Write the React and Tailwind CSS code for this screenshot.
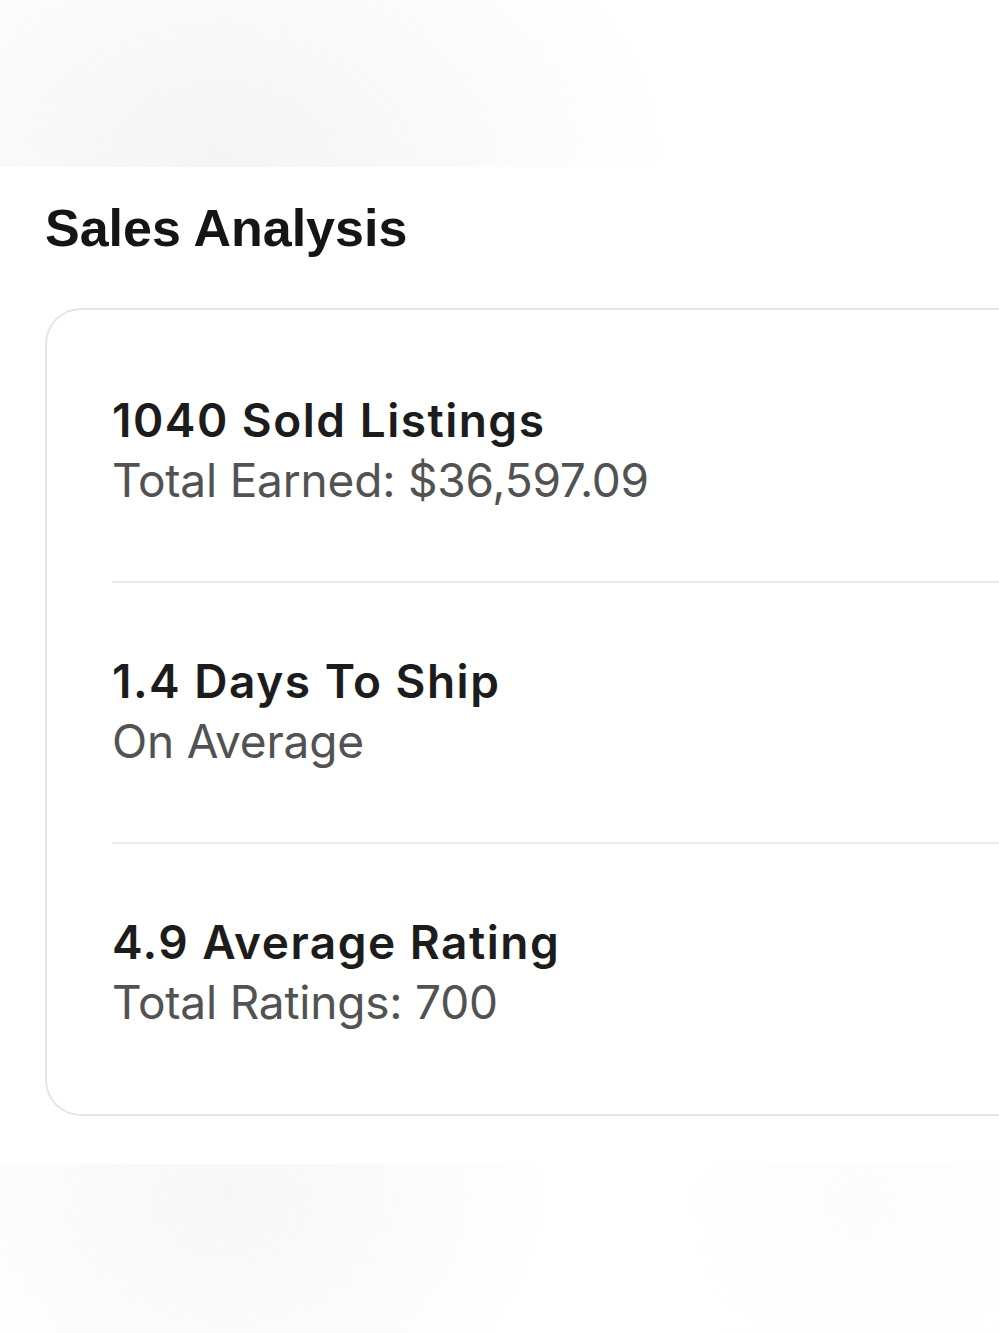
const STATS = [
  { title: '1040 Sold Listings', sub: 'Total Earned: $36,597.09' },
  { title: '1.4 Days To Ship', sub: 'On Average' },
  { title: '4.9 Average Rating', sub: 'Total Ratings: 700' },
]

export default function App() {
  return (
    <div className="min-h-[1333px] w-[999px] overflow-hidden bg-white flex flex-col">
      {/* blurred preview strip */}
      <div className="h-[167px] shrink-0 bg-[radial-gradient(ellipse_460px_320px_at_220px_160px,#f5f5f5_0%,#f9f9f9_45%,#ffffff_100%)]" />

      <div className="pl-[45px] pt-[31px]">
        <h2 className="font-['Liberation_Sans',Arial,sans-serif] font-bold text-[52px] leading-[60px] text-[#151515]">
          Sales Analysis
        </h2>

        <div className="mt-[50px] border-2 border-r-0 border-[#e6e6e6] rounded-l-[36px] pl-[65px] pt-[12px] pb-[11px] font-['Inter',sans-serif]">
          {STATS.map((s, i) => (
            <div key={s.title}>
              {i > 0 && <div className="h-[2px] bg-[#ebebeb]" />}
              <div className="pt-[68px] pb-[71px]">
                <p className="text-[46px] leading-[60px] font-semibold tracking-[1.5px] text-[#1c1c1c]">{s.title}</p>
                <p className="text-[46px] leading-[60px] font-normal tracking-[-0.2px] text-[#525252]">{s.sub}</p>
              </div>
            </div>
          ))}
        </div>
      </div>

      {/* blurred preview strip, bottom */}
      <div className="mt-[48px] flex-1 bg-[radial-gradient(ellipse_330px_260px_at_230px_30px,#f7f7f7_0%,#fbfbfb_55%,#ffffff00_100%),radial-gradient(ellipse_200px_200px_at_860px_40px,#fcfcfc_0%,#ffffff00_100%)]" />
    </div>
  )
}
